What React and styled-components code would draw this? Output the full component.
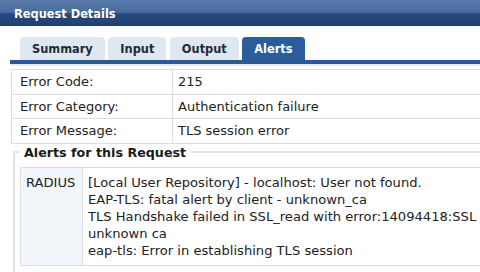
import React from "react";
import styled, { createGlobalStyle } from "styled-components";

const Global = createGlobalStyle`
  html, body { margin: 0; padding: 0; background: #fff; }
  body { font-family: "DejaVu Sans", Verdana, sans-serif; color: #222; overflow: hidden; }
  #root { width: 480px; height: 272px; overflow: hidden; }
`;

const Page = styled.div`
  width: 500px;
`;

const Header = styled.div`
  height: 26px;
  display: flex;
  align-items: center;
  padding: 1px 0 0 14px;
  box-sizing: border-box;
  background: linear-gradient(#5a7cab 0%, #4a6d9f 45%, #27497e 55%, #223f72 100%);
  color: #fff;
  font-weight: bold;
  font-size: 11.4px;
`;

const Body = styled.div`
  padding: 11px 0 0 10px;
`;

const TabBar = styled.div`
  display: flex;
  gap: 3.5px;
  padding-left: 10px;
  border-bottom: 4px solid #2a5993;
`;

const Tab = styled.div`
  height: 23px;
  display: flex;
  align-items: center;
  justify-content: center;
  padding: 0 12px;
  border-radius: 4px 4px 0 0;
  font-weight: bold;
  font-size: 11.4px;
  background: ${(p) => (p.$active ? "#2b5d9a" : "#dfe7f0")};
  color: ${(p) => (p.$active ? "#fff" : "#1e2a38")};
`;

const Panel = styled.div`
  border-top: 2px solid #e6ebf0;
  padding-top: 3px;
`;

const InfoTable = styled.table`
  border-collapse: collapse;
  margin-left: 1px;
  width: 490px;
  font-size: 13px;
`;

const Label = styled.td`
  width: 152px;
  height: 23.5px;
  padding: 0 0 0 8px;
  border: 1px solid #dadfe3;
`;

const Value = styled.td`
  padding: 0 0 0 5px;
  border: 1px solid #dadfe3;
`;

const Fieldset = styled.fieldset`
  margin: 1px 0 0 3px;
  padding: 7px 0 6px 4px;
  border: 2px solid #e3e3e3;
  border-right: none;
`;

const Legend = styled.legend`
  font-weight: bold;
  font-size: 12.7px;
  padding: 0 5px;
  color: #1a1a1a;
`;

const AlertTable = styled.table`
  border-collapse: collapse;
  margin-left: 1px;
  width: 480px;
  font-size: 13.1px;
  line-height: 17.2px;
`;

const Source = styled.td`
  width: 51px;
  vertical-align: top;
  padding: 6px 5px 5px 5px;
  background: #f2f6fa;
  border: 1px solid #dadfe3;
`;

const Messages = styled.td`
  vertical-align: top;
  padding: 6px 0 5px 5px;
  border: 1px solid #dadfe3;
`;

const Line = styled.div`
  white-space: nowrap;
`;

export default function App() {
  const tabs = ["Summary", "Input", "Output", "Alerts"];
  const rows = [
    ["Error Code:", "215"],
    ["Error Category:", "Authentication failure"],
    ["Error Message:", "TLS session error"],
  ];
  const lines = [
    "[Local User Repository] - localhost: User not found.",
    "EAP-TLS: fatal alert by client - unknown_ca",
    "TLS Handshake failed in SSL_read with error:14094418:SSL",
    "unknown ca",
    "eap-tls: Error in establishing TLS session",
  ];
  return (
    <Page>
      <Global />
      <Header>Request Details</Header>
      <Body>
        <TabBar>
          {tabs.map((t) => (
            <Tab key={t} $active={t === "Alerts"}>
              {t}
            </Tab>
          ))}
        </TabBar>
        <Panel>
          <InfoTable>
            <tbody>
              {rows.map(([k, v]) => (
                <tr key={k}>
                  <Label>{k}</Label>
                  <Value>{v}</Value>
                </tr>
              ))}
            </tbody>
          </InfoTable>
          <Fieldset>
            <Legend>Alerts for this Request</Legend>
            <AlertTable>
              <tbody>
                <tr>
                  <Source>RADIUS</Source>
                  <Messages>
                    {lines.map((l) => (
                      <Line key={l}>{l}</Line>
                    ))}
                  </Messages>
                </tr>
              </tbody>
            </AlertTable>
          </Fieldset>
        </Panel>
      </Body>
    </Page>
  );
}
